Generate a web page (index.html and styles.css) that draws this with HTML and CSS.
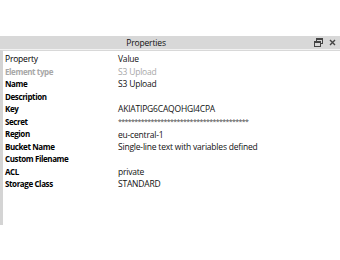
FILE: index.html
```html
<!DOCTYPE html>
<html>
<head>
<meta charset="utf-8">
<link rel="stylesheet" href="styles.css">
</head>
<body>
<div class="panel">
  <div class="titlebar">
    <span class="title">Properties</span>
    <div class="actions">
      <svg class="icon" width="9" height="9" viewBox="0 0 9 9"><rect x="2.5" y="0.5" width="6" height="5" fill="none" stroke="#444" stroke-width="1"/><rect x="2.5" y="0.5" width="6" height="1.5" fill="#444"/><rect x="0.5" y="3.5" width="6" height="5" fill="#d8d8d8" stroke="#444" stroke-width="1"/><rect x="0.5" y="3.5" width="6" height="1.5" fill="#444"/></svg>
      <svg class="icon" width="7" height="7" viewBox="0 0 7 7"><path d="M1 1L6 6M6 1L1 6" stroke="#444" stroke-width="1.4"/></svg>
    </div>
  </div>
  <div class="body">
    <div class="row head"><span class="k">Property</span><span class="v">Value</span></div>
    <div class="row dim"><span class="k">Element type</span><span class="v">S3 Upload</span></div>
    <div class="row"><span class="k">Name</span><span class="v">S3 Upload</span></div>
    <div class="row"><span class="k">Description</span><span class="v"></span></div>
    <div class="row"><span class="k">Key</span><span class="v">AKIATIPG6CAQOHGI4CPA</span></div>
    <div class="row"><span class="k">Secret</span><span class="v secret">****************************************</span></div>
    <div class="row"><span class="k">Region</span><span class="v low">eu-central-1</span></div>
    <div class="row"><span class="k">Bucket Name</span><span class="v">Single-line text with variables defined</span></div>
    <div class="row"><span class="k">Custom Filename</span><span class="v"></span></div>
    <div class="row"><span class="k">ACL</span><span class="v low">private</span></div>
    <div class="row"><span class="k">Storage Class</span><span class="v">STANDARD</span></div>
  </div>
</div>
</body>
</html>
```
FILE: styles.css
```css
html, body {
  margin: 0;
  background: #ffffff;
}
body {
  font-family: "Open Sans", "Noto Sans", sans-serif;
  font-size: 8.5px;
  color: #111;
  padding-top: 36px;
}
.panel {
  width: 340px;
}
.titlebar {
  height: 13px;
  background: #d8d8d8;
  border-bottom: 1px solid #f2f2f2;
  display: flex;
  align-items: center;
  justify-content: center;
  position: relative;
}
.title {
  font-size: 8.5px;
  line-height: 13px;
  color: #111;
  letter-spacing: -0.15px;
  margin-right: 48px;
}
.actions {
  position: absolute;
  right: 4px;
  top: 2px;
  display: flex;
  gap: 6px;
  align-items: center;
}
.body {
  border-left: 3px solid #d4d4d4;
  border-top: 1px solid #d8d8d8;
  height: 172px;
  padding-top: 2px;
}
.row {
  display: flex;
  height: 12.5px;
  line-height: 12.5px;
}
.k {
  width: 113px;
  padding-left: 2px;
  font-size: 8px;
  font-weight: 700;
  color: #000;
  letter-spacing: -0.4px;
}
.v {
  color: #111;
  letter-spacing: -0.2px;
}
.head .k { font-weight: 400; letter-spacing: -0.2px; font-size: 8.5px; }
.dim .k, .dim .v { color: #a8a8a8; }
.low { position: relative; top: 1.5px; line-height: 10px; }
.secret { font-size: 7px; letter-spacing: -0.6px; color: #444; }
```
